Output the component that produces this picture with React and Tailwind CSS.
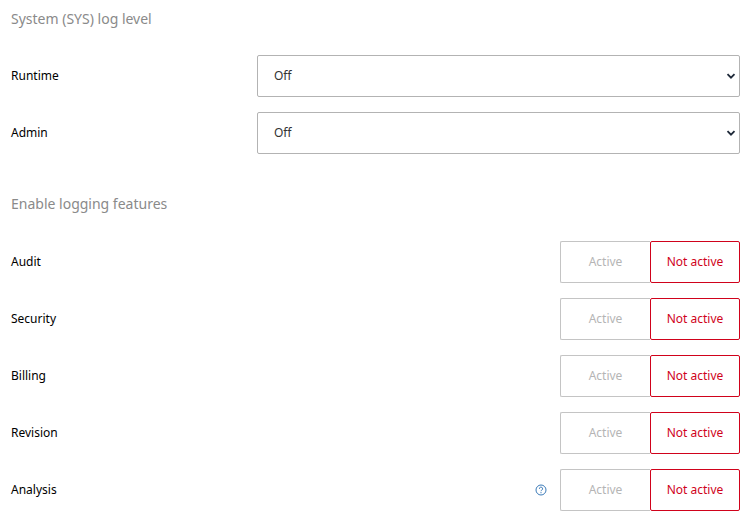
import React from 'react';

const features = ['Audit', 'Security', 'Billing', 'Revision', 'Analysis'];

function Chevron() {
  return (
    <svg width="10" height="10" viewBox="0 0 10 10" className="text-gray-800">
      <path d="M1.5 3.2 L5 6.7 L8.5 3.2" fill="none" stroke="currentColor" strokeWidth="1.8" />
    </svg>
  );
}

function Help() {
  return (
    <svg width="12" height="12" viewBox="0 0 12 12" className="text-[#3a7ab8]">
      <circle cx="6" cy="6" r="5" fill="none" stroke="currentColor" strokeWidth="1" />
      <path d="M4.4 4.8a1.6 1.6 0 1 1 2.4 1.3c-.6.3-.8.6-.8 1.1" fill="none" stroke="currentColor" strokeWidth="1" />
      <circle cx="6" cy="8.7" r="0.6" fill="currentColor" />
    </svg>
  );
}

export default function App() {
  return (
    <div className="w-[752px] h-[528px] bg-white pl-[11px] pr-[12px] font-['Roboto',sans-serif] text-[12px] text-black">
      <div className="pt-[8px] h-[55px] text-[14px] text-[#8a8a8a]">System (SYS) log level</div>
      {['Runtime', 'Admin'].map((l) => (
        <div key={l} className="flex items-center h-[42px] mb-[15px]">
          <div className="w-[246px]">{l}</div>
          <div className="flex-1 h-full border border-[#b3b3b3] rounded-[2px] flex items-center justify-between pl-[16px] pr-[3px] text-[#333]">
            <span>Off</span>
            <Chevron />
          </div>
        </div>
      ))}
      <div className="pt-[24px] h-[72px] text-[14px] text-[#8a8a8a]">Enable logging features</div>
      {features.map((f) => (
        <div key={f} className="flex items-center h-[42px] mb-[15px]">
          <div className="flex-1">{f}</div>
          {f === 'Analysis' && <div className="mr-[13px] flex"><Help /></div>}
          <div className="flex h-full">
            <div className="w-[90px] border border-[#c4c4c4] border-r-0 rounded-l-[2px] flex items-center justify-center text-[#b5b5b5]">Active</div>
            <div className="w-[90px] border border-[#d0021b] rounded-[2px] flex items-center justify-center text-[#d0021b]">Not active</div>
          </div>
        </div>
      ))}
    </div>
  );
}
